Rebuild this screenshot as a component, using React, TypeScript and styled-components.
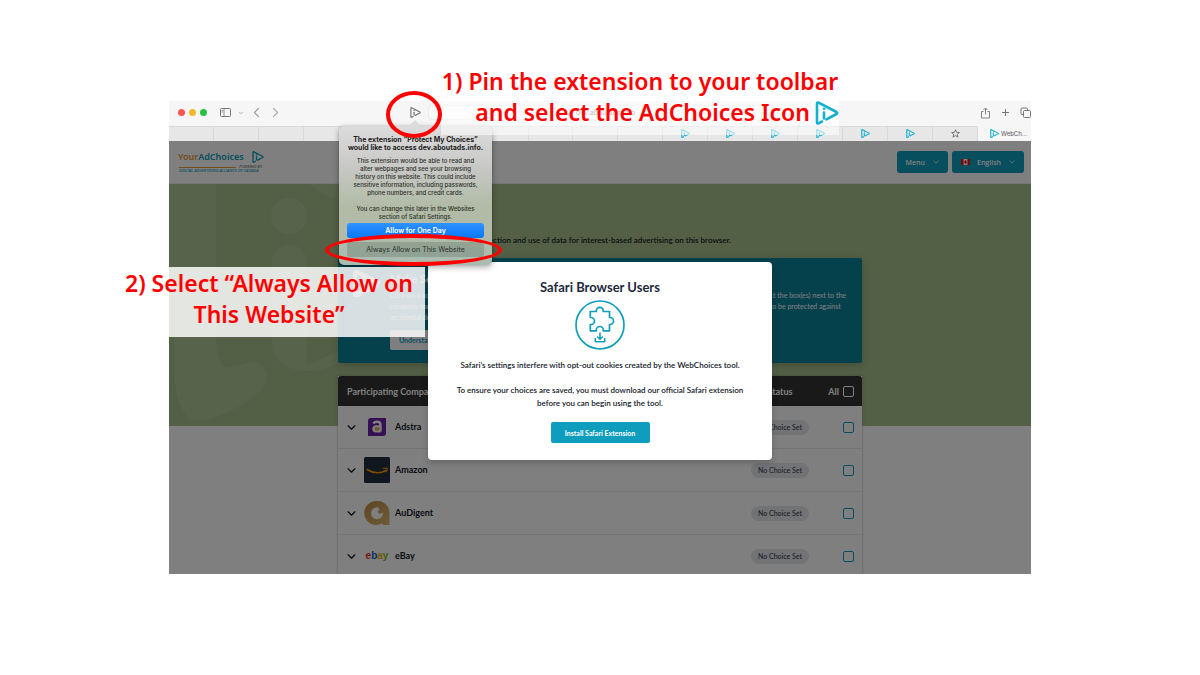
import React from "react";
import styled, { createGlobalStyle, css } from "styled-components";

const lato = `Lato, "Liberation Sans", sans-serif`;
const system = `Inter, "Liberation Sans", sans-serif`;
const noto = `"Noto Sans", "Liberation Sans", sans-serif`;
const teal = "#0e9dbc";

const Global = createGlobalStyle`
  * { box-sizing: border-box; }
  body { margin: 0; background: #fff; }
  button, input, select { font: inherit; color: inherit; margin: 0; padding: 0; border: 0; background: none; }
  svg { display: block; flex: none; }
`;

const Slide = styled.main`
  min-height: 100vh;
  padding: 101px 169px;
`;

const Stage = styled.div`
  position: relative;
`;

const Browser = styled.section`
  overflow: hidden;
  font-family: ${system};
`;

const Toolbar = styled.div`
  display: grid;
  grid-template-columns: 1fr 380px 1fr;
  align-items: center;
  height: 25px;
  padding-bottom: 2px;
  background: #f6f6f6;
  color: #777;
`;

const ToolGroup = styled.div<{ $end?: boolean }>`
  display: flex;
  align-items: center;
  gap: 8px;
  padding-left: 9px;
  ${(p) => p.$end && css`justify-content: flex-end; gap: 10px; padding: 0;`}
`;

const Lights = styled.div`
  display: flex;
  gap: 4px;
  margin-right: 5px;
`;

const Light = styled.span<{ $color: string }>`
  width: 7px;
  height: 7px;
  border-radius: 50%;
  background: ${(p) => p.$color};
`;

const IconButton = styled.button`
  display: flex;
  align-items: center;
  justify-content: center;
`;

const AddressGroup = styled.div`
  display: flex;
  align-items: center;
  gap: 7px;
`;

const Address = styled.label`
  flex: 1;
  display: flex;
  align-items: center;
  justify-content: center;
  gap: 3px;
  height: 15px;
  margin-right: 9px;
  padding-right: 3px;
  border: 1px solid #ececec;
  border-radius: 4px;
  background: #f9f9f9;
  font-size: 7px;
`;

const AddressInput = styled.input`
  width: 62px;
  margin: 0 auto 0 0;
`;

const AddressLock = styled.span`
  margin-left: auto;
`;

const TabBar = styled.div`
  display: grid;
  grid-template-columns: repeat(18, 1fr) 53px;
  height: 15px;
  background: #e7e7e7;
  color: #555;
`;

const Tab = styled.button<{ $active?: boolean }>`
  display: flex;
  align-items: center;
  justify-content: center;
  gap: 2px;
  padding-bottom: 2px;
  border-top: 1px solid #d9d9d9;
  border-right: 1px solid #d9d9d9;
  font-size: 6px;
  ${(p) => p.$active && css`background: #f6f6f6; border-color: #f6f6f6; padding-left: 9px;`}
`;

const Page = styled.div`
  position: relative;
  overflow: hidden;
  background: #fff;
  font-family: ${lato};
  color: #111827;
`;

const Header = styled.header`
  display: flex;
  align-items: center;
  justify-content: space-between;
  height: 43px;
  padding: 0 7px 0 9px;
  border-bottom: 1px solid #eee;
`;

const Brand = styled.a`
  display: grid;
  width: 86px;
  color: ${teal};
  text-decoration: none;
  font-family: ${noto};
`;

const BrandName = styled.span`
  display: flex;
  align-items: center;
  justify-content: space-between;
  font-size: 9px;
  line-height: 12px;
  font-weight: 600;
`;

const BrandYour = styled.span`
  color: #e8973a;
`;

const BrandRule = styled.span`
  display: flex;
  align-items: center;
  gap: 3px;
  padding: 2px 2px 0 1px;
  font-size: 4px;
  line-height: 4px;
  font-style: italic;
  color: #666;

  &::before {
    content: "";
    flex: 1;
    height: 1px;
    background: #e8973a;
  }
`;

const BrandTag = styled.span`
  padding-left: 1px;
  font-size: 4px;
  line-height: 4px;
  font-style: italic;
  font-weight: 500;
  white-space: nowrap;
`;

const Nav = styled.nav`
  display: flex;
  gap: 4px;
`;

const navItem = css`
  display: flex;
  align-items: center;
  height: 22px;
  padding: 0 9px;
  border-radius: 3px;
  background: ${teal};
  color: #fff;
  font-family: "Open Sans", sans-serif;
  font-size: 7px;
  font-weight: 600;
`;

const MenuButton = styled.button`
  ${navItem}
  gap: 8px;
`;

const Language = styled.label`
  ${navItem}
  gap: 7px;
  width: 72px;
`;

const LanguageSelect = styled.select`
  flex: 1;
  appearance: none;
`;

const Content = styled.div`
  position: relative;
  padding-top: 50px;
  background: linear-gradient(#a6c08a 0 242px, #fff 242px);
`;

const HeroArt = styled.svg`
  position: absolute;
  left: 0;
  top: 0;
`;

const Column = styled.div`
  position: relative;
  width: 524px;
  margin: 0 auto;
`;

const Intro = styled.p`
  display: flex;
  justify-content: flex-end;
  width: 75%;
  margin: 0 0 12px;
  font-size: 8px;
  line-height: 12px;
  font-weight: 600;
  white-space: nowrap;
`;

const Card = styled.section`
  display: flex;
  gap: 10px;
  height: 105px;
  padding: 12px 16px 0 15px;
  margin-bottom: 13px;
  border-radius: 2px;
  background: #0b809a;
  box-shadow: 0 2px 8px rgba(0, 0, 0, 0.2);
  color: #fff;
`;

const CardBody = styled.div`
  flex: 1;
  padding-top: 1px;
`;

const CardTitle = styled.h2`
  margin: 0 0 3px;
  font-size: 11px;
  line-height: 16px;
  font-weight: 700;
`;

const CardText = styled.div`
  display: flex;
  justify-content: space-between;
  font-size: 7px;
  line-height: 11px;
  white-space: pre-line;
`;

const CardButton = styled.button`
  display: block;
  height: 20px;
  margin-top: 7px;
  padding: 0 9px;
  border-radius: 2px;
  background: #fff;
  color: ${teal};
  font-size: 7px;
  font-weight: 700;
`;

const Table = styled.table`
  width: 100%;
  margin-bottom: -4px;
  border-collapse: separate;
  border-spacing: 0;
  table-layout: fixed;
  background: #fff;
  box-shadow: 0 0 3px rgba(0, 0, 0, 0.25);
`;

const HeadCell = styled.th<{ $align?: string; $width?: string }>`
  width: ${(p) => p.$width ?? "auto"};
  height: 30px;
  padding: 0 8px 0 9px;
  background: #333;
  color: #fff;
  font-size: 9px;
  font-weight: 700;
  text-align: ${(p) => p.$align ?? "left"};

  &:first-child { border-radius: 3px 0 0 0; }
  &:last-child { border-radius: 0 3px 0 0; }
`;

const Cell = styled.td<{ $align?: string }>`
  height: 43px;
  padding: 0 8px 0 9px;
  border-bottom: 1px solid #eaeaea;
  font-size: 9px;
  line-height: 12px;
  text-align: ${(p) => p.$align ?? "left"};
`;

const AllLabel = styled.label`
  display: flex;
  align-items: center;
  justify-content: flex-end;
  gap: 4px;
`;

const Check = styled.input<{ $light?: boolean }>`
  appearance: none;
  width: 11px;
  height: 11px;
  border: 1px solid ${(p) => (p.$light ? "#fff" : teal)};
  border-radius: 2px;
  vertical-align: middle;
`;

const Company = styled.div`
  display: flex;
  align-items: center;
  font-weight: 700;
`;

const Logo = styled.span`
  display: flex;
  align-items: center;
  justify-content: center;
  width: 26px;
  height: 26px;
  margin: 0 5px 0 8px;
`;

const Badge = styled.span`
  display: inline-block;
  width: 58px;
  border-radius: 8px;
  background: #e5e7eb;
  color: #374151;
  font-size: 7px;
  line-height: 15px;
  font-weight: 500;
  text-align: center;
  vertical-align: middle;
`;

const EbayWord = styled.span`
  font-family: "Liberation Sans", sans-serif;
  font-size: 10px;
  font-weight: 600;
`;

const EbayLetter = styled.span<{ $color: string }>`
  color: ${(p) => p.$color};
`;

const Backdrop = styled.div`
  position: absolute;
  inset: 0;
  display: flex;
  justify-content: center;
  align-items: flex-start;
  padding-top: 121px;
  background: rgba(0, 0, 0, 0.5);
`;

const Modal = styled.div`
  display: flex;
  flex-direction: column;
  align-items: center;
  width: 344px;
  padding: 16px 20px 17px;
  border-radius: 4px;
  background: #fff;
  box-shadow: 0 3px 6px rgba(0, 0, 0, 0.2);
  text-align: center;
`;

const ModalTitle = styled.h1`
  margin: 0 0 4px;
  font-size: 13px;
  line-height: 18px;
  font-weight: 700;
  color: #1e293b;
`;

const ModalText = styled.p`
  margin: 0 0 12px;
  font-size: 8px;
  line-height: 13px;
  font-weight: 600;

  &:first-of-type { margin-top: 9px; }
`;

const InstallButton = styled.button`
  width: 99px;
  height: 21px;
  border-radius: 2px;
  background: ${teal};
  color: #fff;
  font-size: 7px;
  font-weight: 700;
`;

const Popover = styled.div`
  position: absolute;
  left: calc(50% - 261px);
  top: 25px;
  width: 153px;
  padding: 10px 8px 8px;
  border-radius: 5px;
  background: linear-gradient(#dddcdd, #c9c9c7 28%, #b1bba6 58%, #b1bba8 78%, #a8bdb1);
  box-shadow: 0 2px 6px rgba(0, 0, 0, 0.35), 0 0 1px rgba(0, 0, 0, 0.4);
  font-family: ${system};
  color: #2d302b;
  text-align: center;

  &::before {
    content: "";
    position: absolute;
    left: 70px;
    bottom: 100%;
    border: 6px solid transparent;
    border-top: 0;
    border-bottom-color: #dddcdd;
  }
`;

const PopTitle = styled.h2`
  margin: 0 -8px 5px;
  font-size: 7px;
  line-height: 8px;
  font-weight: 700;
  color: #1d1d1d;
`;

const PopText = styled.p`
  margin: 0 -8px 8px;
  font-size: 6px;
  line-height: 8px;
  font-weight: 500;

  &:last-of-type { margin-bottom: 2px; }
`;

const PopActions = styled.div`
  display: grid;
  gap: 4px;
`;

const PopButton = styled.button<{ $primary?: boolean }>`
  height: 15px;
  border-radius: 3px;
  font-size: 7px;
  background: rgba(40, 60, 50, 0.2);
  ${(p) => p.$primary && css`background: linear-gradient(#2f93ff, #0a78fb); color: #fff; font-weight: 600;`}
`;

const Ring = styled.span<{ $left: number; $top: number; $width: number; $height: number }>`
  position: absolute;
  left: calc(50% - ${(p) => p.$left}px);
  top: ${(p) => p.$top}px;
  width: ${(p) => p.$width}px;
  height: ${(p) => p.$height}px;
  border: 4px solid #f00;
  border-radius: 50%;
`;

const Note = styled.p<{ $left: number; $top: number; $width: number; $alpha: number }>`
  position: absolute;
  left: calc(50% - ${(p) => p.$left}px);
  top: ${(p) => p.$top}px;
  width: ${(p) => p.$width}px;
  margin: 0;
  padding: 1px 0 7px;
  background: rgba(255, 255, 255, ${(p) => p.$alpha});
  color: #f00;
  font-family: ${noto};
  font-size: 23px;
  line-height: 31px;
  font-weight: 600;
  text-align: center;
  white-space: nowrap;
`;

const NoteLine = styled.span<{ $icon?: boolean }>`
  display: flex;
  justify-content: ${(p) => (p.$icon ? "flex-end" : "center")};
  align-items: center;
  gap: 5px;
`;

const NoteIcon = styled.span`
  background: #fff;
`;

const AdIcon = ({ size, color = "#13b0cf", weight = 2 }: { size: number; color?: string; weight?: number }) => (
  <svg width={size} height={size} viewBox="0 0 24 24" fill="none" stroke={color} strokeWidth={weight} strokeLinejoin="round" strokeLinecap="round">
    <path d="M7 20.500 3.600 22.400Q2 23 2 21.200V2.800Q2 1 3.600 1.700L21.500 11Q23 12 21.500 13L11.500 18.300" />
    <path d="M9 11.500V17.500" />
    <circle cx="9" cy="7.800" r="0.900" fill={color} strokeWidth="1" />
  </svg>
);

const Chevron = ({ size = 6, color = "currentColor", rotate = 0, weight = 1 }: { size?: number; color?: string; rotate?: number; weight?: number }) => (
  <svg width={size} height={size} viewBox="0 0 8 8" fill="none" stroke={color} strokeWidth={weight} strokeLinecap="round" strokeLinejoin="round">
    <path d="M1 2.500 4 5.500 7 2.500" transform={`rotate(${rotate} 4 4)`} />
  </svg>
);

const AdstraLogo = () => (
  <svg width="18" height="18" viewBox="0 0 18 18">
    <path d="M3 0H18V15a3 3 0 0 1-3 3H0V3a3 3 0 0 1 3-3Z" fill="#6b21a8" />
    <path d="M5.300 5.500Q6.500 3.800 9 3.800 12.500 3.800 12.500 7V13.500M12.500 8.500H8.500Q5.500 8.700 5.500 11T8.500 13.300H12.500" fill="none" stroke="#fff" strokeWidth="2.400" />
    <path d="M7 9.500H11V12.500H7Z" fill="#f0a04b" />
  </svg>
);

const AmazonLogo = () => (
  <svg width="26" height="26" viewBox="0 0 26 26">
    <rect width="26" height="26" rx="1.500" fill="#232f3e" />
    <path d="M3 12.500Q12.500 18.500 22 13.500" fill="none" stroke="#ff9900" strokeWidth="1.500" strokeLinecap="round" />
    <path d="M19.500 11.500Q23.500 10.500 23.300 11.800T22 15" fill="none" stroke="#ff9900" strokeWidth="1.100" strokeLinecap="round" />
  </svg>
);

const AudigentLogo = () => (
  <svg width="26" height="26" viewBox="0 0 26 26">
    <defs>
      <linearGradient id="gold" x1="0" y1="0" x2="1" y2="1">
        <stop offset="0" stopColor="#b98a45" />
        <stop offset="1" stopColor="#dfb671" />
      </linearGradient>
    </defs>
    <path d="M13 1A12 12 0 0 1 25.500 13V25H19.500L18 23.500A12 12 0 1 1 13 1Z" fill="url(#gold)" />
    <path d="M13.500 7.200A6 6 0 1 0 19 12.500Q16.500 14.500 14.500 13T15.800 9.500Z" fill="#fff" />
  </svg>
);

const EbayLogo = () => (
  <EbayWord>
    <EbayLetter $color="#e53238">e</EbayLetter>
    <EbayLetter $color="#0064d2">b</EbayLetter>
    <EbayLetter $color="#f5af02">a</EbayLetter>
    <EbayLetter $color="#86b817">y</EbayLetter>
  </EbayWord>
);

const companies = [
  { name: "Adstra", logo: <AdstraLogo /> },
  { name: "Amazon", logo: <AmazonLogo /> },
  { name: "AuDigent", logo: <AudigentLogo /> },
  { name: "eBay", logo: <EbayLogo /> },
];

const BrowserChrome = () => (
  <>
    <Toolbar>
      <ToolGroup>
        <Lights>
          <Light $color="#fc5753" />
          <Light $color="#f5b82e" />
          <Light $color="#28c13f" />
        </Lights>
        <IconButton aria-label="Sidebar">
          <svg width="11" height="9" viewBox="0 0 11 9" fill="none" stroke="currentColor">
            <rect x="0.500" y="0.500" width="10" height="8" rx="1" />
            <path d="M4 0.500V8.500M1.500 2.500H3M1.500 4H3" strokeWidth="0.800" />
          </svg>
        </IconButton>
        <Chevron size={4} />
        <IconButton aria-label="Back"><Chevron size={11} rotate={90} weight={0.8} color="#999" /></IconButton>
        <IconButton aria-label="Forward"><Chevron size={11} rotate={-90} weight={0.8} color="#aaa" /></IconButton>
      </ToolGroup>
      <AddressGroup>
        <IconButton aria-label="Protect My Choices"><AdIcon size={11} color="#777" weight={2.6} /></IconButton>
        <Address>
          <AddressLock>
            <svg width="5" height="6" viewBox="0 0 5 6">
              <path d="M0.500 2.500H4.500V6H0.500Z" fill="#999" />
              <path d="M1.300 2.500V1.500a1.200 1.200 0 0 1 2.400 0V2.500" fill="none" stroke="#999" strokeWidth="0.700" />
            </svg>
          </AddressLock>
          <AddressInput aria-label="Address" defaultValue="dev.aboutads.info" />
        </Address>
      </AddressGroup>
      <ToolGroup $end>
        <IconButton aria-label="Share">
          <svg width="11" height="12" viewBox="0 0 11 12" fill="none" stroke="currentColor" strokeWidth="0.900">
            <path d="M3.500 4.500H1.500V11H9.500V4.500H7.500M5.500 7.500V1M3.500 3 5.500 1 7.500 3" />
          </svg>
        </IconButton>
        <IconButton aria-label="New tab">
          <svg width="9" height="9" viewBox="0 0 9 9" stroke="currentColor"><path d="M4.500 1V8M1 4.500H8" /></svg>
        </IconButton>
        <IconButton aria-label="Tab overview">
          <svg width="11" height="11" viewBox="0 0 11 11" fill="none" stroke="currentColor">
            <path d="M3 7.500H2Q1 7.500 1 6.500V2Q1 1 2 1H6.500Q7.500 1 7.500 2V3" />
            <rect x="3.500" y="3.500" width="7" height="7" rx="1" />
          </svg>
        </IconButton>
      </ToolGroup>
    </Toolbar>
    <TabBar>
      {Array.from({ length: 11 }, (_, i) => <Tab key={i} aria-label={`Tab ${i + 1}`} />)}
      {Array.from({ length: 6 }, (_, i) => (
        <Tab key={i} aria-label={`Tab ${i + 12}`}><AdIcon size={9} weight={3} /></Tab>
      ))}
      <Tab aria-label="Favorites">
        <svg width="9" height="9" viewBox="0 0 24 24" fill="none" stroke="currentColor" strokeWidth="2">
          <path d="M12 2 15 9 22.500 9.500 16.700 14.300 18.600 21.700 12 17.600 5.400 21.700 7.300 14.300 1.500 9.500 9 9Z" />
        </svg>
      </Tab>
      <Tab $active><AdIcon size={9} weight={3} />WebCh...</Tab>
    </TabBar>
  </>
);

const SiteHeader = () => (
  <Header>
    <Brand href="#home">
      <BrandName>
        <span><BrandYour>Your</BrandYour>AdChoices</span>
        <AdIcon size={12} color={teal} weight={2.6} />
      </BrandName>
      <BrandRule>POWERED BY</BrandRule>
      <BrandTag>DIGITAL ADVERTISING ALLIANCE OF CANADA</BrandTag>
    </Brand>
    <Nav>
      <MenuButton>Menu<Chevron /></MenuButton>
      <Language>
        <svg width="9" height="6" viewBox="0 0 9 6">
          <rect width="9" height="6" fill="#e11" />
          <rect x="2.500" width="4" height="6" fill="#fff" />
          <path d="M4.500 1 6 3 4.500 5 3 3Z" fill="#e11" />
        </svg>
        <LanguageSelect aria-label="Language"><option>English</option></LanguageSelect>
        <Chevron />
      </Language>
    </Nav>
  </Header>
);

const CompanyTable = () => (
  <Table>
    <thead>
      <tr>
        <HeadCell>Participating Companies</HeadCell>
        <HeadCell $width="77px" $align="center">Status</HeadCell>
        <HeadCell $width="44px" $align="right">
          <AllLabel>All<Check type="checkbox" $light /></AllLabel>
        </HeadCell>
      </tr>
    </thead>
    <tbody>
      {companies.map(({ name, logo }) => (
        <tr key={name}>
          <Cell>
            <Company>
              <IconButton aria-label={`Expand ${name}`}><Chevron size={9} weight={1.1} /></IconButton>
              <Logo>{logo}</Logo>
              {name}
            </Company>
          </Cell>
          <Cell $align="center"><Badge>No Choice Set</Badge></Cell>
          <Cell $align="right"><Check type="checkbox" aria-label={`Opt out of ${name}`} /></Cell>
        </tr>
      ))}
    </tbody>
  </Table>
);

const InstallDialog = () => (
  <Modal role="dialog" aria-labelledby="dialog-title">
    <ModalTitle id="dialog-title">Safari Browser Users</ModalTitle>
    <svg width="50" height="50" viewBox="0 0 50 50" fill="none" stroke={teal} strokeWidth="1.700" strokeLinejoin="round">
      <circle cx="25" cy="25" r="24" />
      <path d="M15.300 11.500H21.300V10.800A3.500 3.500 0 0 1 28.300 10.800V11.500H34.500V17.500H35A3.500 3.500 0 0 1 35 24.500H34.500V30.800H28.300V30A3.500 3.500 0 0 0 21.300 30V30.800H15.300V24.500H16A3.500 3.500 0 0 0 16 17.500H15.300Z" />
      <path d="M25 32.500V39M22.200 36.500 25 39.200 27.800 36.500M20.300 38V41.800H29.700V38" strokeWidth="1.500" />
    </svg>
    <ModalText>Safari’s settings interfere with opt-out cookies created by the WebChoices tool.</ModalText>
    <ModalText>
      To ensure your choices are saved, you must download our official Safari extension
      <br />
      before you can begin using the tool.
    </ModalText>
    <InstallButton>Install Safari Extension</InstallButton>
  </Modal>
);

const PermissionPopover = () => (
  <Popover role="alertdialog" aria-label="Extension access">
    <PopTitle>
      The extension “Protect My Choices”
      <br />
      would like to access dev.aboutads.info.
    </PopTitle>
    <PopText>
      This extension would be able to read and
      <br />alter webpages and see your browsing
      <br />history on this website. This could include
      <br />sensitive information, including passwords,
      <br />phone numbers, and credit cards.
    </PopText>
    <PopText>
      You can change this later in the Websites
      <br />section of Safari Settings.
    </PopText>
    <PopActions>
      <PopButton $primary>Allow for One Day</PopButton>
      <PopButton>Always Allow on This Website</PopButton>
    </PopActions>
  </Popover>
);

export default function App() {
  return (
    <Slide>
      <Global />
      <Stage>
        <Browser>
          <BrowserChrome />
          <Page>
            <SiteHeader />
            <Content>
              <HeroArt width="172" height="242" viewBox="0 0 172 242" fill="#fff" fillOpacity="0.1">
                <path d="M0 0H47V150C47 178 54 186 66 182L84 178C98 178 102 196 92 206C80 220 50 234 32 237C14 238 6 214 5 190V100H0Z" />
                <circle cx="120" cy="32" r="18" />
                <path d="M103 79C103 55 138 55 138 79V180C162 172 172 164 172 164V176C160 186 144 188 134 187C112 184 103 172 103 160Z" />
                <path d="M140 0H172V16Q154 12 140 0Z" />
              </HeroArt>
              <Column>
                <Intro>Make your choices about the collection and use of data for interest-based advertising on this browser.</Intro>
                <Card>
                  <AdIcon size={27} color="#fff" weight={4} />
                  <CardBody>
                    <CardTitle>Make Selections</CardTitle>
                    <CardText>
                      <span>{"Click on a company name to learn more\ncompany name to set your choices and\naccidental deletion of your choices."}</span>
                      <span>{"select the box(es) next to the\nlike to be protected against"}</span>
                    </CardText>
                    <CardButton>Understand Your Choices</CardButton>
                  </CardBody>
                </Card>
                <CompanyTable />
              </Column>
            </Content>
            <Backdrop><InstallDialog /></Backdrop>
          </Page>
        </Browser>
        <PermissionPopover />
        <Note $left={159} $top={-36} $width={398} $alpha={0.55}>
          <NoteLine>1) Pin the extension to your toolbar</NoteLine>
          <NoteLine $icon>
            and select the AdChoices Icon
            <NoteIcon><AdIcon size={24} weight={2.6} /></NoteIcon>
          </NoteLine>
        </Note>
        <Note $left={487} $top={166} $width={312} $alpha={0.84}>
          <NoteLine>2) Select “Always Allow on</NoteLine>
          <NoteLine>This Website”</NoteLine>
        </Note>
        <Ring $left={214} $top={-10} $width={56} $height={47} />
        <Ring $left={275} $top={133} $width={177} $height={32} />
      </Stage>
    </Slide>
  );
}
